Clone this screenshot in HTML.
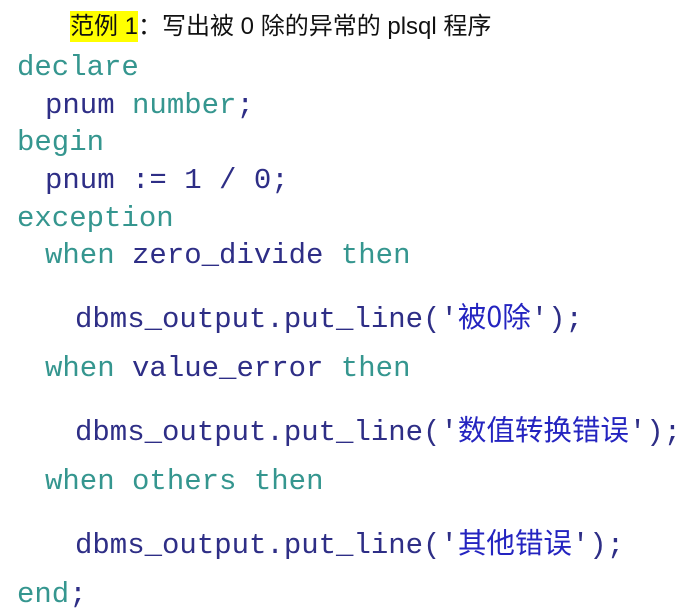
<!DOCTYPE html>
<html><head><meta charset="utf-8"><style>
body{margin:0;width:697px;height:611px;background:#fff;position:relative;overflow:hidden}
.l{position:absolute;white-space:pre;font-family:"Liberation Mono","Noto Sans CJK SC",monospace;font-size:29px;line-height:34px;color:#2e2e86}
.k{color:#35968f}
.s{color:#2424c0;font-family:"Noto Sans CJK SC",sans-serif;font-size:28.5px}
.t{position:absolute;left:70px;top:11px;font-family:"Liberation Sans","Noto Sans CJK SC",sans-serif;font-size:24px;line-height:32px;color:#111;white-space:pre}
.hl{background:#ffff00;padding:2px 0}
</style></head><body>
<div class="t"><span class="hl">范例 1</span>：写出被 0 除的异常的 plsql 程序</div>
<div class="l k" style="left:17px;top:51px">declare</div>
<div class="l" style="left:45px;top:89px">pnum <span class="k">number</span>;</div>
<div class="l k" style="left:17px;top:126px">begin</div>
<div class="l" style="left:45px;top:164px">pnum := 1 / 0;</div>
<div class="l k" style="left:17px;top:202px">exception</div>
<div class="l" style="left:45px;top:239px"><span class="k">when</span> zero_divide <span class="k">then</span></div>
<div class="l" style="left:75px;top:299px">dbms_output.put_line('<span class="s">被0除</span>');</div>
<div class="l" style="left:45px;top:352px"><span class="k">when</span> value_error <span class="k">then</span></div>
<div class="l" style="left:75px;top:412px">dbms_output.put_line('<span class="s">数值转换错误</span>');</div>
<div class="l" style="left:45px;top:465px"><span class="k">when</span> <span class="k">others</span> <span class="k">then</span></div>
<div class="l" style="left:75px;top:525px">dbms_output.put_line('<span class="s">其他错误</span>');</div>
<div class="l k" style="left:17px;top:578px">end<span style="color:#2e2e86">;</span></div>
</body></html>
